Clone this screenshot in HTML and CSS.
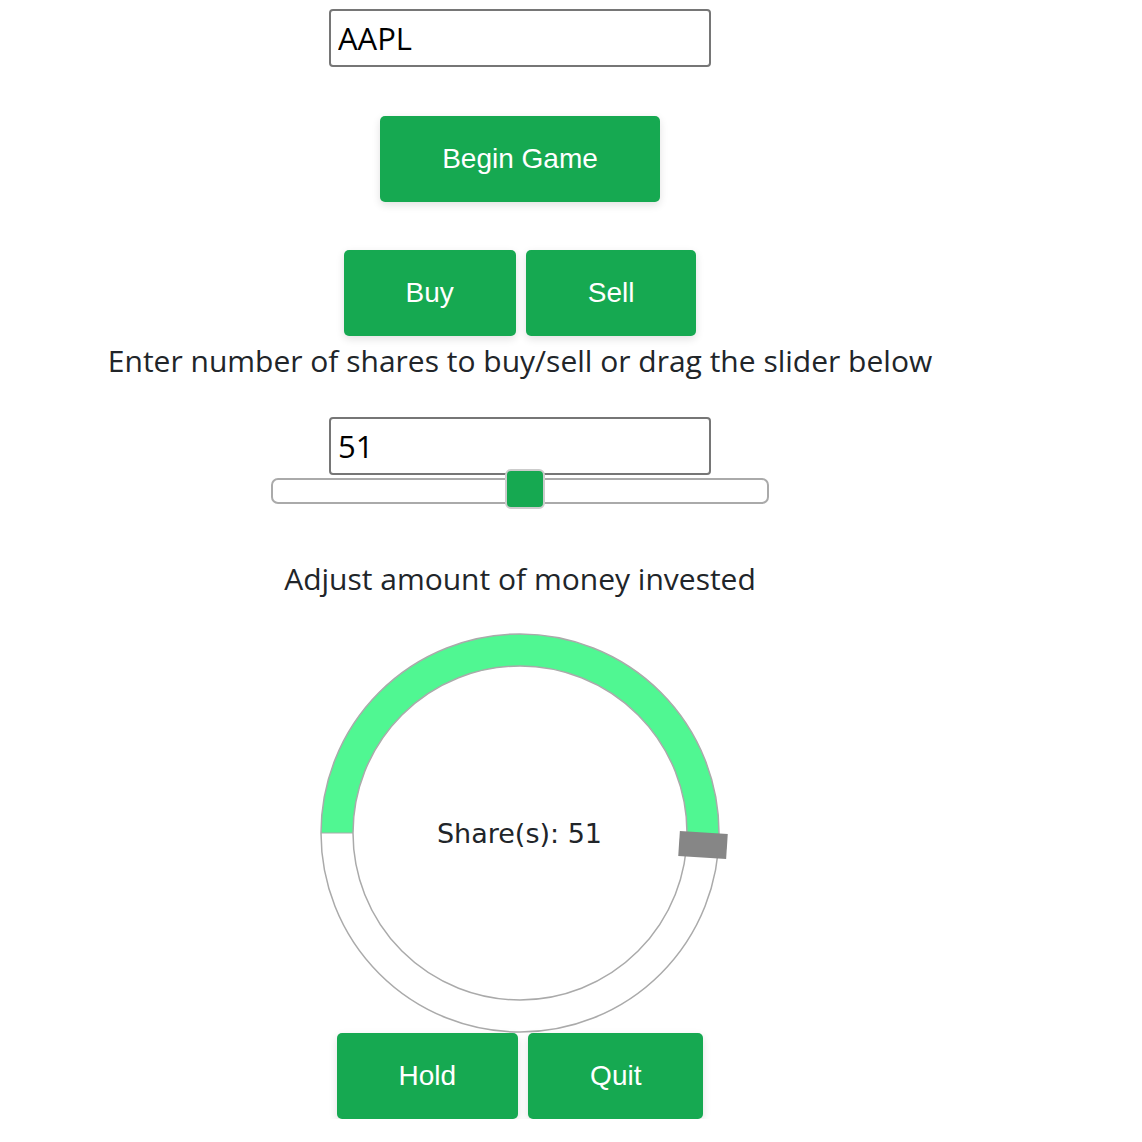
FILE: index.html
```html
<!DOCTYPE html>
<html>
<head>
<meta charset="utf-8">
<link rel="stylesheet" href="styles.css">
</head>
<body>
<div class="app">
  <input class="field ticker" type="text" value="AAPL">
  <button class="btn begin">Begin Game</button>
  <div class="row row-trade">
    <button class="btn">Buy</button>
    <button class="btn">Sell</button>
  </div>
  <p class="label label-shares">Enter number of shares to buy/sell or drag the slider below</p>
  <input class="field shares" type="text" value="51">
  <div class="slider">
    <span class="thumb" style="left: 232px"></span>
  </div>
  <p class="label label-money">Adjust amount of money invested</p>
  <svg class="dial" width="400" height="400" viewBox="0 0 400 400">
    <path class="dial-fill" d="M 17 200 A 183 183 0 1 1 382.61 211.97"/>
    <circle class="dial-edge" cx="200" cy="200" r="199"/>
    <circle class="dial-edge" cx="200" cy="200" r="167"/>
    <line class="dial-cap" x1="1" y1="200" x2="33" y2="200"/>
    <rect class="dial-handle" x="359" y="199.5" width="48" height="25" transform="rotate(3.75 383 212)"/>
    <text class="dial-text" x="199.5" y="210" text-anchor="middle">Share(s): 51</text>
  </svg>
  <div class="row row-end">
    <button class="btn">Hold</button>
    <button class="btn">Quit</button>
  </div>
</div>
</body>
</html>
```
FILE: styles.css
```css
html, body {
  margin: 0;
  padding: 0;
  background: #ffffff;
}

.app {
  width: 1040px;
  display: flex;
  flex-direction: column;
  align-items: center;
  padding-top: 9px;
  font-family: "Open Sans", "Noto Sans", sans-serif;
  color: #212529;
}

.field {
  box-sizing: border-box;
  width: 382px;
  height: 58px;
  margin: 0;
  padding: 0 7px;
  border: 2px solid #767676;
  border-radius: 4px;
  font-family: "Open Sans", "Noto Sans", sans-serif;
  font-size: 31px;
  color: #000;
  background: #fff;
  outline: none;
}

.btn {
  box-sizing: border-box;
  height: 86px;
  padding: 0 62px;
  margin: 0;
  border: none;
  border-radius: 5px;
  background: #16a951;
  color: #ffffff;
  font-family: "Liberation Sans", Arial, sans-serif;
  font-size: 28px;
  box-shadow: 0 3px 8px rgba(0, 0, 0, 0.12);
  cursor: pointer;
}

.begin {
  margin-top: 49px;
}

.row {
  display: flex;
  gap: 10px;
}

.row-trade {
  margin-top: 48px;
}

.label {
  margin: 0;
  font-size: 30px;
  line-height: 36px;
  white-space: nowrap;
}

.label-shares {
  margin-top: 7px;
}

.shares {
  margin-top: 38px;
}

.slider {
  position: relative;
  box-sizing: border-box;
  width: 498px;
  height: 26px;
  margin-top: 3px;
  border: 2px solid #aaaaaa;
  border-radius: 7px;
  background: #ffffff;
}

.thumb {
  position: absolute;
  top: -11px;
  box-sizing: border-box;
  width: 40px;
  height: 40px;
  border: 2px solid #cccccc;
  border-radius: 6px;
  background: #16a951;
}

.label-money {
  margin-top: 57px;
}

.dial {
  display: block;
  margin-top: 36px;
  overflow: visible;
}

.dial-fill {
  fill: none;
  stroke: #50f792;
  stroke-width: 32;
}

.dial-edge {
  fill: none;
  stroke: #aaaaaa;
  stroke-width: 1.5;
}

.dial-cap {
  stroke: #aaaaaa;
  stroke-width: 1;
}

.dial-handle {
  fill: #868686;
}

.dial-text {
  font-family: "DejaVu Sans", Verdana, sans-serif;
  font-size: 27px;
  fill: #212529;
}

.row-end {
  margin-top: 0;
}
```
